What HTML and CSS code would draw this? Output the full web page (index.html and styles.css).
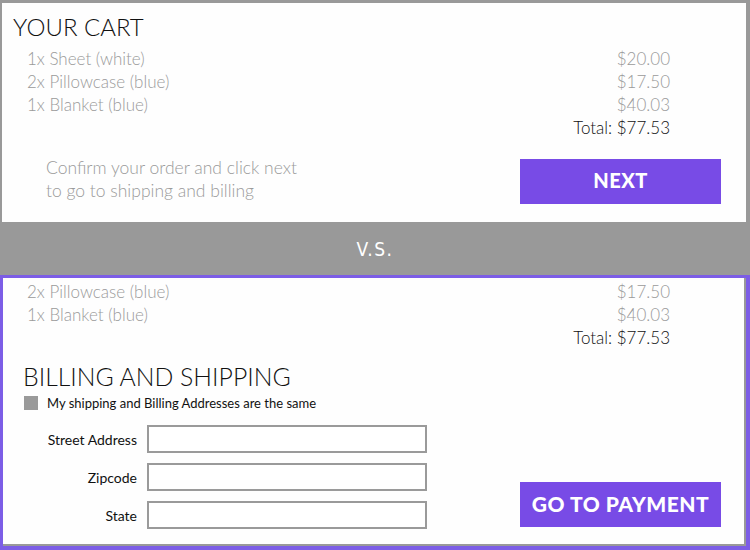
FILE: index.html
```html
<!DOCTYPE html>
<html lang="en">
<head>
<meta charset="utf-8">
<title>Cart vs Billing</title>
<link rel="stylesheet" href="styles.css">
</head>
<body>
  <section class="panel top">
    <h1 class="title">YOUR CART</h1>
    <div class="cart">
      <ul class="items">
        <li>1x Sheet (white)</li>
        <li>2x Pillowcase (blue)</li>
        <li>1x Blanket (blue)</li>
      </ul>
      <ul class="prices">
        <li>$20.00</li>
        <li>$17.50</li>
        <li>$40.03</li>
        <li class="total">Total: $77.53</li>
      </ul>
    </div>
    <div class="footer">
      <p class="hint">Confirm your order and click next<br>to go to shipping and billing</p>
      <button class="btn next">NEXT</button>
    </div>
  </section>

  <div class="band">V.S.</div>

  <section class="frame">
    <div class="panel bottom">
      <div class="cart cart-b">
        <ul class="items">
          <li>2x Pillowcase (blue)</li>
          <li>1x Blanket (blue)</li>
        </ul>
        <ul class="prices">
          <li>$17.50</li>
          <li>$40.03</li>
          <li class="total">Total: $77.53</li>
        </ul>
      </div>
      <h2 class="title2">BILLING AND SHIPPING</h2>
      <label class="same"><span class="box"></span>My shipping and Billing Addresses are the same</label>
      <div class="lower">
        <div class="form">
          <label class="lbl">Street Address</label><span class="field"></span>
          <label class="lbl">Zipcode</label><span class="field"></span>
          <label class="lbl">State</label><span class="field"></span>
        </div>
        <button class="btn pay">GO TO PAYMENT</button>
      </div>
    </div>
  </section>
</body>
</html>
```

FILE: styles.css
```css
* { box-sizing: border-box; }
html, body { margin: 0; padding: 0; }
body {
  width: 750px;
  height: 550px;
  background: #999999;
  font-family: "Lato", "Liberation Sans", sans-serif;
  font-weight: 300;
  overflow: hidden;
}
ul { list-style: none; margin: 0; padding: 0; }
p, h1, h2 { margin: 0; font-weight: 300; }

.panel { background: #fefefe; }

.top {
  margin: 3px 4px 0 2px;
  height: 219px;
  padding: 9px 25px 0 11px;
}
.title {
  font-size: 24px;
  line-height: 30px;
  color: #111;
}
.cart {
  display: flex;
  justify-content: space-between;
  margin-top: 5px;
  padding: 0 51px 0 14px;
  font-size: 17px;
  line-height: 23px;
  color: #9a9a9a;
}
.prices { text-align: right; }
.total { color: #111; }

.footer {
  display: flex;
  justify-content: space-between;
  align-items: flex-start;
  margin-top: 17px;
  padding-left: 33px;
}
.hint {
  font-size: 17.5px;
  line-height: 23px;
  color: #9a9a9a;
}
.btn {
  border: none;
  background: #784be6;
  color: #fff;
  font-family: "Lato", "Liberation Sans", sans-serif;
  font-weight: 900;
  font-size: 20px;
  width: 201px;
  height: 45px;
  padding: 0 0 3px;
  letter-spacing: 0.5px;
}
.next { margin-top: 3px; }

.band {
  height: 53px;
  display: flex;
  align-items: center;
  justify-content: center;
  color: #fff;
  font-family: "DejaVu Sans Condensed", "DejaVu Sans", sans-serif;
  font-stretch: condensed;
  font-size: 19px;
  letter-spacing: 1.5px;
}

.frame {
  border: 3px solid #7c5de6;
  border-right-width: 4px;
  border-bottom-width: 4px;
  height: 275px;
}
.bottom {
  height: 268px;
  border-right: 2px solid #999999;
  border-bottom: 2px solid #999999;
  padding-top: 2px;
}
.cart-b {
  margin-top: 0;
  padding: 0 74px 0 24px;
}
.title2 {
  margin-top: 14px;
  padding-left: 20px;
  font-size: 24.8px;
  line-height: 28px;
  color: #111;
}
.same {
  display: flex;
  align-items: center;
  gap: 9px;
  margin-top: 4px;
  padding-left: 21px;
  font-size: 13px;
  line-height: 16px;
  color: #111;
  font-weight: 400;
}
.box {
  width: 14px;
  height: 14px;
  background: #9a9a9a;
  flex: none;
}
.lower {
  display: flex;
  justify-content: space-between;
  align-items: flex-end;
  margin-top: 14px;
  padding-right: 23px;
}
.form {
  display: grid;
  grid-template-columns: 134px 280px;
  column-gap: 10px;
  row-gap: 10px;
  align-items: center;
}
.lbl {
  text-align: right;
  font-size: 14px;
  color: #111;
  font-weight: 400;
}
.field {
  display: block;
  height: 28px;
  border: 2px solid #9a9a9a;
  background: #fff;
}
.pay { margin-bottom: 2px; font-size: 21px; }
```
